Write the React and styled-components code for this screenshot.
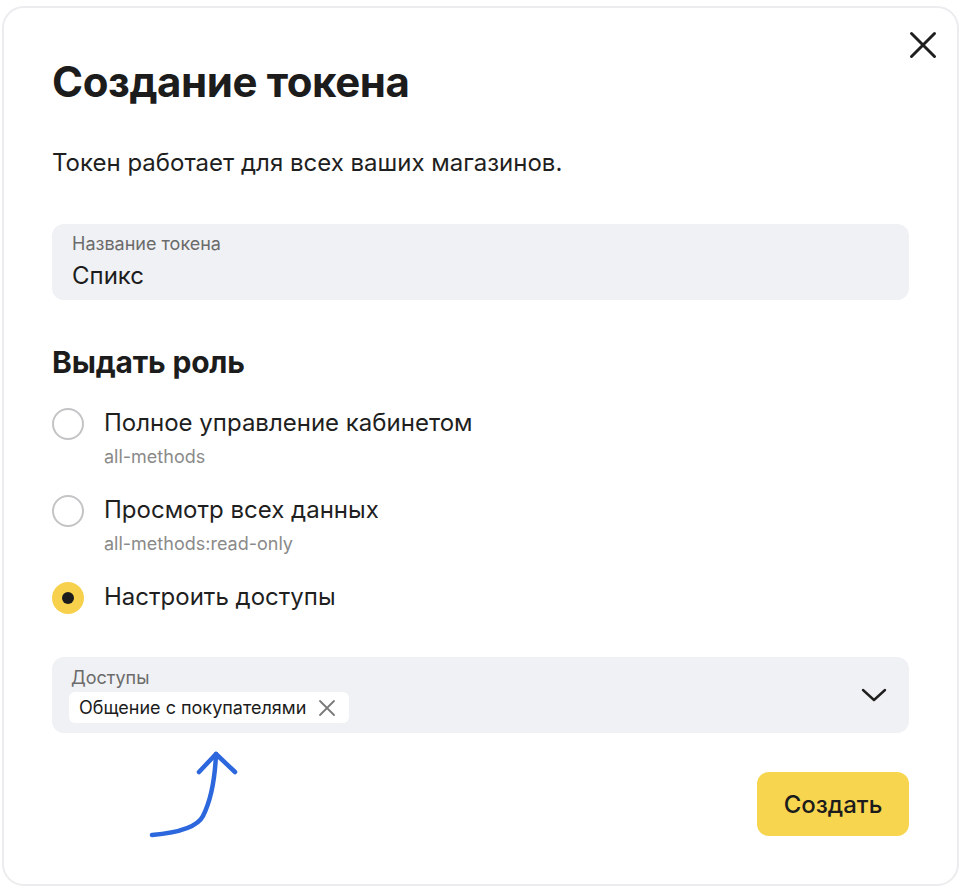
import React, { useState } from "react";
import styled, { createGlobalStyle } from "styled-components";

const GlobalStyle = createGlobalStyle`
  html, body {
    margin: 0;
    padding: 0;
    background: #fff;
    font-family: "Inter", "Noto Sans", sans-serif;
    color: #1f1f1f;
  }
`;

const roles = [
  { id: "all", title: "Полное управление кабинетом", sub: "all-methods" },
  { id: "read", title: "Просмотр всех данных", sub: "all-methods:read-only" },
  { id: "custom", title: "Настроить доступы" },
];

function App() {
  const [role, setRole] = useState("custom");

  return (
    <>
      <GlobalStyle />
      <Card>
        <CloseBtn aria-label="Закрыть">
          <svg width="28" height="28" viewBox="0 0 28 28">
            <path d="M2.5 2.5L25.5 25.5M25.5 2.5L2.5 25.5" stroke="#1f1f1f" strokeWidth="3" strokeLinecap="round" />
          </svg>
        </CloseBtn>

        <Title>Создание токена</Title>
        <Lead>Токен работает для всех ваших магазинов.</Lead>

        <Field>
          <FieldLabel>Название токена</FieldLabel>
          <FieldValue>Спикс</FieldValue>
        </Field>

        <SubTitle>Выдать роль</SubTitle>
        <RadioList>
          {roles.map((r) => (
            <RadioRow key={r.id} onClick={() => setRole(r.id)}>
              <Radio $checked={role === r.id} />
              <RadioText>
                <RadioTitle>{r.title}</RadioTitle>
                {r.sub && <RadioSub>{r.sub}</RadioSub>}
              </RadioText>
            </RadioRow>
          ))}
        </RadioList>

        <Select>
          <SelectBody>
            <FieldLabel>Доступы</FieldLabel>
            <Tag>
              Общение с покупателями
              <svg width="18" height="18" viewBox="0 0 18 18">
                <path d="M2 2L16 16M16 2L2 16" stroke="#7a7a7a" strokeWidth="1.8" strokeLinecap="round" />
              </svg>
            </Tag>
          </SelectBody>
          <svg width="26" height="16" viewBox="0 0 26 16">
            <path d="M2 3L13 13L24 3" fill="none" stroke="#1f1f1f" strokeWidth="2.4" strokeLinecap="round" strokeLinejoin="round" />
          </svg>
        </Select>

        <Footer>
          <Hint width="100" height="95" viewBox="0 0 100 95">
            <path d="M7 87C30 85 52 80 58 68C66 52 70 30 71 6" fill="none" stroke="#2c67de" strokeWidth="4.5" strokeLinecap="round" />
            <path d="M54 24L71 6L90 24" fill="none" stroke="#2c67de" strokeWidth="4.5" strokeLinecap="round" strokeLinejoin="round" />
          </Hint>
          <PrimaryButton>Создать</PrimaryButton>
        </Footer>
      </Card>
    </>
  );
}

const Card = styled.div`
  position: relative;
  box-sizing: border-box;
  width: 957px;
  height: 880px;
  margin: 6px 0 0 2px;
  border: 2px solid #ececef;
  border-radius: 22px;
  padding: 46px 48px 0 48px;
  display: flex;
  flex-direction: column;
`;

const CloseBtn = styled.button`
  position: absolute;
  top: 21px;
  right: 18px;
  width: 32px;
  height: 32px;
  padding: 0;
  border: none;
  background: none;
  display: flex;
  align-items: center;
  justify-content: center;
  cursor: pointer;
`;

const Title = styled.h1`
  margin: 0;
  font-size: 42px;
  line-height: 56px;
  font-weight: 700;
  letter-spacing: -0.4px;
  color: #1c1c1c;
`;

const Lead = styled.p`
  margin: 38px 0 0;
  font-size: 24px;
  line-height: 30px;
  color: #1f1f1f;
`;

const Field = styled.div`
  margin-top: 46px;
  height: 76px;
  box-sizing: border-box;
  background: #f0f1f4;
  border-radius: 12px;
  padding: 10px 20px;
  display: flex;
  flex-direction: column;
`;

const FieldLabel = styled.div`
  font-size: 18px;
  line-height: 20px;
  color: #6b6b6b;
`;

const FieldValue = styled.div`
  margin-top: 6px;
  font-size: 24px;
  line-height: 32px;
  color: #1c1c1c;
`;

const SubTitle = styled.h2`
  margin: 43px 0 0;
  font-size: 30px;
  line-height: 38px;
  font-weight: 700;
  letter-spacing: -0.2px;
  color: #1c1c1c;
`;

const RadioList = styled.div`
  margin-top: 25px;
  display: flex;
  flex-direction: column;
  gap: 25px;
`;

const RadioRow = styled.div`
  display: flex;
  align-items: flex-start;
  gap: 20px;
  cursor: pointer;
`;

const Radio = styled.span`
  flex: none;
  box-sizing: border-box;
  width: 32px;
  height: 32px;
  border-radius: 50%;
  margin-top: 2px;
  border: ${(p) => (p.$checked ? "none" : "2.5px solid #c4c4c6")};
  background: ${(p) => (p.$checked ? "#f7d14c" : "#fff")};
  display: flex;
  align-items: center;
  justify-content: center;
  &::after {
    content: "";
    display: ${(p) => (p.$checked ? "block" : "none")};
    width: 12px;
    height: 12px;
    border-radius: 50%;
    background: #1c1c1c;
  }
`;

const RadioText = styled.div`
  display: flex;
  flex-direction: column;
`;

const RadioTitle = styled.div`
  font-size: 24px;
  line-height: 34px;
  color: #1f1f1f;
`;

const RadioSub = styled.div`
  margin-top: 6px;
  font-size: 18px;
  line-height: 22px;
  color: #8a8a8a;
`;

const Select = styled.div`
  margin-top: 43px;
  height: 76px;
  box-sizing: border-box;
  background: #f0f1f4;
  border-radius: 12px;
  padding: 0 22px 0 17px;
  display: flex;
  align-items: center;
  justify-content: space-between;
`;

const SelectBody = styled.div`
  align-self: stretch;
  padding-top: 10px;
  display: flex;
  flex-direction: column;
  align-items: flex-start;
  & > ${FieldLabel} {
    padding-left: 2px;
    line-height: 22px;
  }
`;

const Tag = styled.div`
  margin-top: 3px;
  height: 31px;
  box-sizing: border-box;
  background: #fff;
  border-radius: 6px;
  padding: 0 13px 0 10px;
  display: flex;
  align-items: center;
  gap: 12px;
  font-size: 18px;
  color: #1c1c1c;
`;

const Footer = styled.div`
  margin-top: 15px;
  display: flex;
  justify-content: space-between;
  align-items: flex-start;
`;

const Hint = styled.svg`
  margin-left: 93px;
  flex: none;
`;

const PrimaryButton = styled.button`
  margin-top: 24px;
  width: 152px;
  height: 64px;
  border: none;
  border-radius: 12px;
  background: #f7d54f;
  font-family: inherit;
  font-size: 24px;
  font-weight: 500;
  color: #1c1c1c;
  cursor: pointer;
`;

export default App;
